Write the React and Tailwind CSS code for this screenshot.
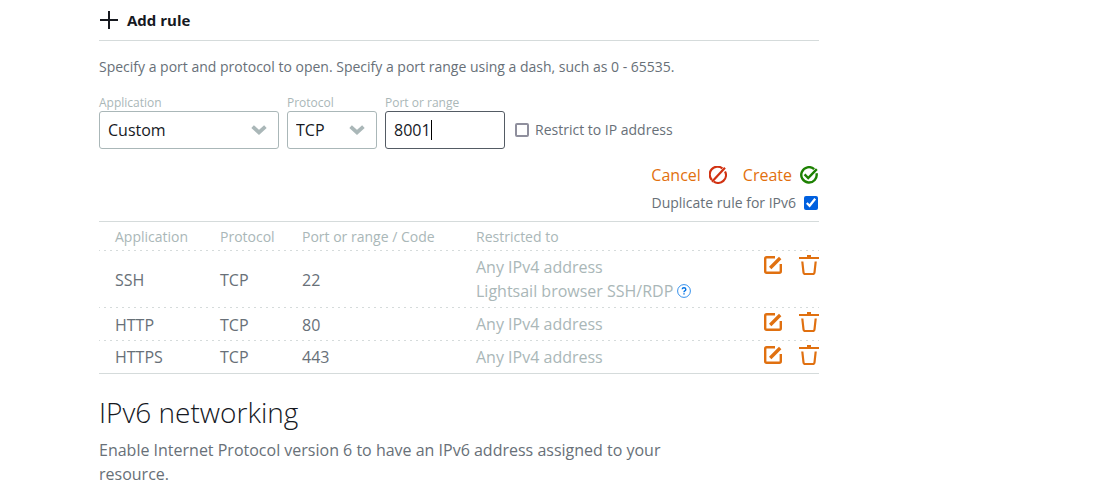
import { useState } from 'react';

const rules = [
  { application: 'SSH', protocol: 'TCP', port: '22', restricted: ['Any IPv4 address', 'Lightsail browser SSH/RDP'] },
  { application: 'HTTP', protocol: 'TCP', port: '80', restricted: ['Any IPv4 address'] },
  { application: 'HTTPS', protocol: 'TCP', port: '443', restricted: ['Any IPv4 address'] },
];

const PlusIcon = () => (
  <svg className="h-5 w-5" viewBox="0 0 20 20" fill="none" stroke="currentColor" strokeWidth="2" aria-hidden="true">
    <path d="M10 1v18M1 10h18" />
  </svg>
);

const ChevronIcon = () => (
  <svg
    className="pointer-events-none absolute right-3 top-3 h-3.5 w-4"
    viewBox="0 0 16 14"
    fill="none"
    stroke="#aab7b8"
    strokeWidth="3.8"
    aria-hidden="true"
  >
    <path d="M1.6 3.6L8 9.4L14.4 3.6" />
  </svg>
);

const CancelIcon = () => (
  <svg className="h-[18px] w-[18px]" viewBox="0 0 18 18" fill="none" stroke="#d13212" strokeWidth="2.2" aria-hidden="true">
    <path d="M13.4 2.4A7.8 7.8 0 0 0 3 14" />
    <path d="M16 5.4A7.8 7.8 0 0 1 4.8 15.6" />
    <path d="M16 1.8L3 15.8" />
  </svg>
);

const CreateIcon = () => (
  <svg className="h-[18px] w-[18px]" viewBox="0 0 18 18" fill="none" stroke="#1d8102" strokeWidth="2.4" aria-hidden="true">
    <path d="M14.2 3.2A7.7 7.7 0 1 0 16.5 7.2" />
    <path d="M4.6 8.4L8.2 12L16.8 3.2" />
  </svg>
);

const EditIcon = () => (
  <svg className="h-5 w-5" viewBox="0 0 20 20" fill="none" stroke="currentColor" strokeWidth="2.4" aria-hidden="true">
    <path d="M12 2.2H3.7Q2.2 2.2 2.2 3.7V16.3Q2.2 17.8 3.7 17.8H16.3Q17.8 17.8 17.8 16.3V9" />
    <path d="M7.2 13L17.2 3" strokeWidth="3.4" />
  </svg>
);

const TrashIcon = () => (
  <svg className="h-5 w-5" viewBox="0 0 20 20" fill="none" stroke="currentColor" strokeWidth="2" aria-hidden="true">
    <path d="M0 3H20M8 1H12" />
    <path d="M3.3 6.5L4.5 17.5Q4.6 19 6 19H14Q15.4 19 15.5 17.5L16.7 6.5" strokeWidth="2.2" />
  </svg>
);

const HelpIcon = () => (
  <svg className="h-3.5 w-3.5" viewBox="0 0 14 14" fill="none" stroke="#0073e6" aria-hidden="true">
    <circle cx="7" cy="7" r="6.4" strokeWidth="0.8" />
    <path d="M5.2 5.3Q5.3 3.8 7 3.8T8.8 5.4Q8.8 6.3 7.8 6.8Q7 7.2 7 8.3M7 9.3V10.6" strokeWidth="1.4" />
  </svg>
);

const SelectField = ({ id, label, className, options }) => (
  <div className={className}>
    <label htmlFor={id} className="block text-xs leading-4 text-[#aab7b8]">{label}</label>
    <div className="relative">
      <select
        id={id}
        className="h-[38px] w-full appearance-none rounded-[3px] border border-[#aab7b8] bg-white px-2 text-base text-[#16191f] outline-none"
      >
        {options.map((option) => (
          <option key={option}>{option}</option>
        ))}
      </select>
      <ChevronIcon />
    </div>
  </div>
);

export default function App() {
  const [port, setPort] = useState('8001');
  const [restrict, setRestrict] = useState(false);
  const [duplicate, setDuplicate] = useState(true);

  return (
    <main className="ml-[99px] max-w-[720px] font-['Open_Sans',sans-serif] text-base text-[#687078]">
      <div className="flex h-[41px] items-center border-b border-[#d5dbdb]">
        <button type="button" className="flex items-center gap-2 text-[15px] font-bold text-[#16191f]">
          <PlusIcon />
          Add rule
        </button>
      </div>

      <form onSubmit={(e) => e.preventDefault()}>
        <p className="mt-3.5 text-sm leading-6">
          Specify a port and protocol to open. Specify a port range using a dash, such as 0 - 65535.
        </p>

        <div className="mt-4 flex items-end gap-2">
          <SelectField id="application" label="Application" className="w-[180px]" options={['Custom', 'SSH', 'HTTP', 'HTTPS']} />
          <SelectField id="protocol" label="Protocol" className="w-[90px]" options={['TCP', 'UDP']} />
          <div className="w-[120px]">
            <label htmlFor="port" className="block text-xs leading-4 text-[#aab7b8]">Port or range</label>
            <div className="relative">
              <input
                id="port"
                type="text"
                autoFocus
                value={port}
                onChange={(e) => setPort(e.target.value)}
                className="peer block h-[38px] w-full rounded-[3px] border border-[#545b64] px-2 text-base text-[#16191f] caret-transparent outline-none"
              />
              <span className="pointer-events-none absolute left-[46px] top-[9px] hidden h-5 w-px bg-black peer-focus:block" />
            </div>
          </div>
          <label className="ml-0.5 flex h-[38px] items-center gap-1.5 text-sm">
            <input
              type="checkbox"
              checked={restrict}
              onChange={(e) => setRestrict(e.target.checked)}
              className="h-3.5 w-3.5 appearance-none rounded-xs border-2 border-[#8f8f9d] checked:bg-[#0060df]"
            />
            Restrict to IP address
          </label>
        </div>

        {/* Form actions */}
        <div className="mt-3.5 flex justify-end gap-4 pr-px leading-6 text-[#e2700e]">
          <button type="button" className="flex items-center gap-2">
            Cancel <CancelIcon />
          </button>
          <button type="submit" className="flex items-center gap-2">
            Create <CreateIcon />
          </button>
        </div>
        <div className="mt-1 flex justify-end pr-px">
          <label className="flex items-center gap-2 text-sm leading-6">
            Duplicate rule for IPv6
            <input
              type="checkbox"
              checked={duplicate}
              onChange={(e) => setDuplicate(e.target.checked)}
              className="h-3.5 w-3.5 accent-[#0060df]"
            />
          </label>
        </div>
      </form>

      <div className="mt-1.5 border-y border-[#d5dbdb]">
        <table className="w-full table-fixed text-left">
          <thead className="text-sm text-[#aab7b8]">
            <tr className="h-[29px] bg-[repeating-linear-gradient(to_right,#d5dbdb_0_1px,transparent_1px_5px,#d5dbdb_5px_6px)] bg-[length:100%_1px] bg-bottom bg-no-repeat">
              <th className="w-[121px] pl-4 font-normal">Application</th>
              <th className="w-[82px] font-normal">Protocol</th>
              <th className="w-[174px] font-normal">Port or range / Code</th>
              <th className="font-normal">Restricted to</th>
              <th className="w-[60px]" aria-label="Actions" />
            </tr>
          </thead>
          <tbody>
            {rules.map((rule) => (
              <tr
                key={rule.application}
                className="group bg-[repeating-linear-gradient(to_right,#d5dbdb_0_1px,transparent_1px_5px,#d5dbdb_5px_6px)] bg-[length:100%_1px] bg-bottom bg-no-repeat last:bg-none"
              >
                <td className="pl-4">{rule.application}</td>
                <td>{rule.protocol}</td>
                <td>{rule.port}</td>
                <td className="pb-[5px] pt-1 text-[#aab7b8] group-last:pb-1">
                  {rule.restricted.map((line) => (
                    <div key={line} className="flex items-center gap-1 leading-6">
                      {line}
                      {line.startsWith('Lightsail') && (
                        <button type="button" aria-label="Help"><HelpIcon /></button>
                      )}
                    </div>
                  ))}
                </td>
                <td className="pt-1 align-top text-[#e07010]">
                  <div className="flex justify-end gap-4">
                    <button type="button" aria-label={`Edit ${rule.application} rule`}><EditIcon /></button>
                    <button type="button" aria-label={`Delete ${rule.application} rule`}><TrashIcon /></button>
                  </div>
                </td>
              </tr>
            ))}
          </tbody>
        </table>
      </div>

      <h2 className="mt-[18px] text-[28px] font-light leading-10 text-[#16191f]">IPv6 networking</h2>
      <p className="mt-1.5 max-w-[580px] leading-6">
        Enable Internet Protocol version 6 to have an IPv6 address assigned to your resource.
      </p>
    </main>
  );
}
